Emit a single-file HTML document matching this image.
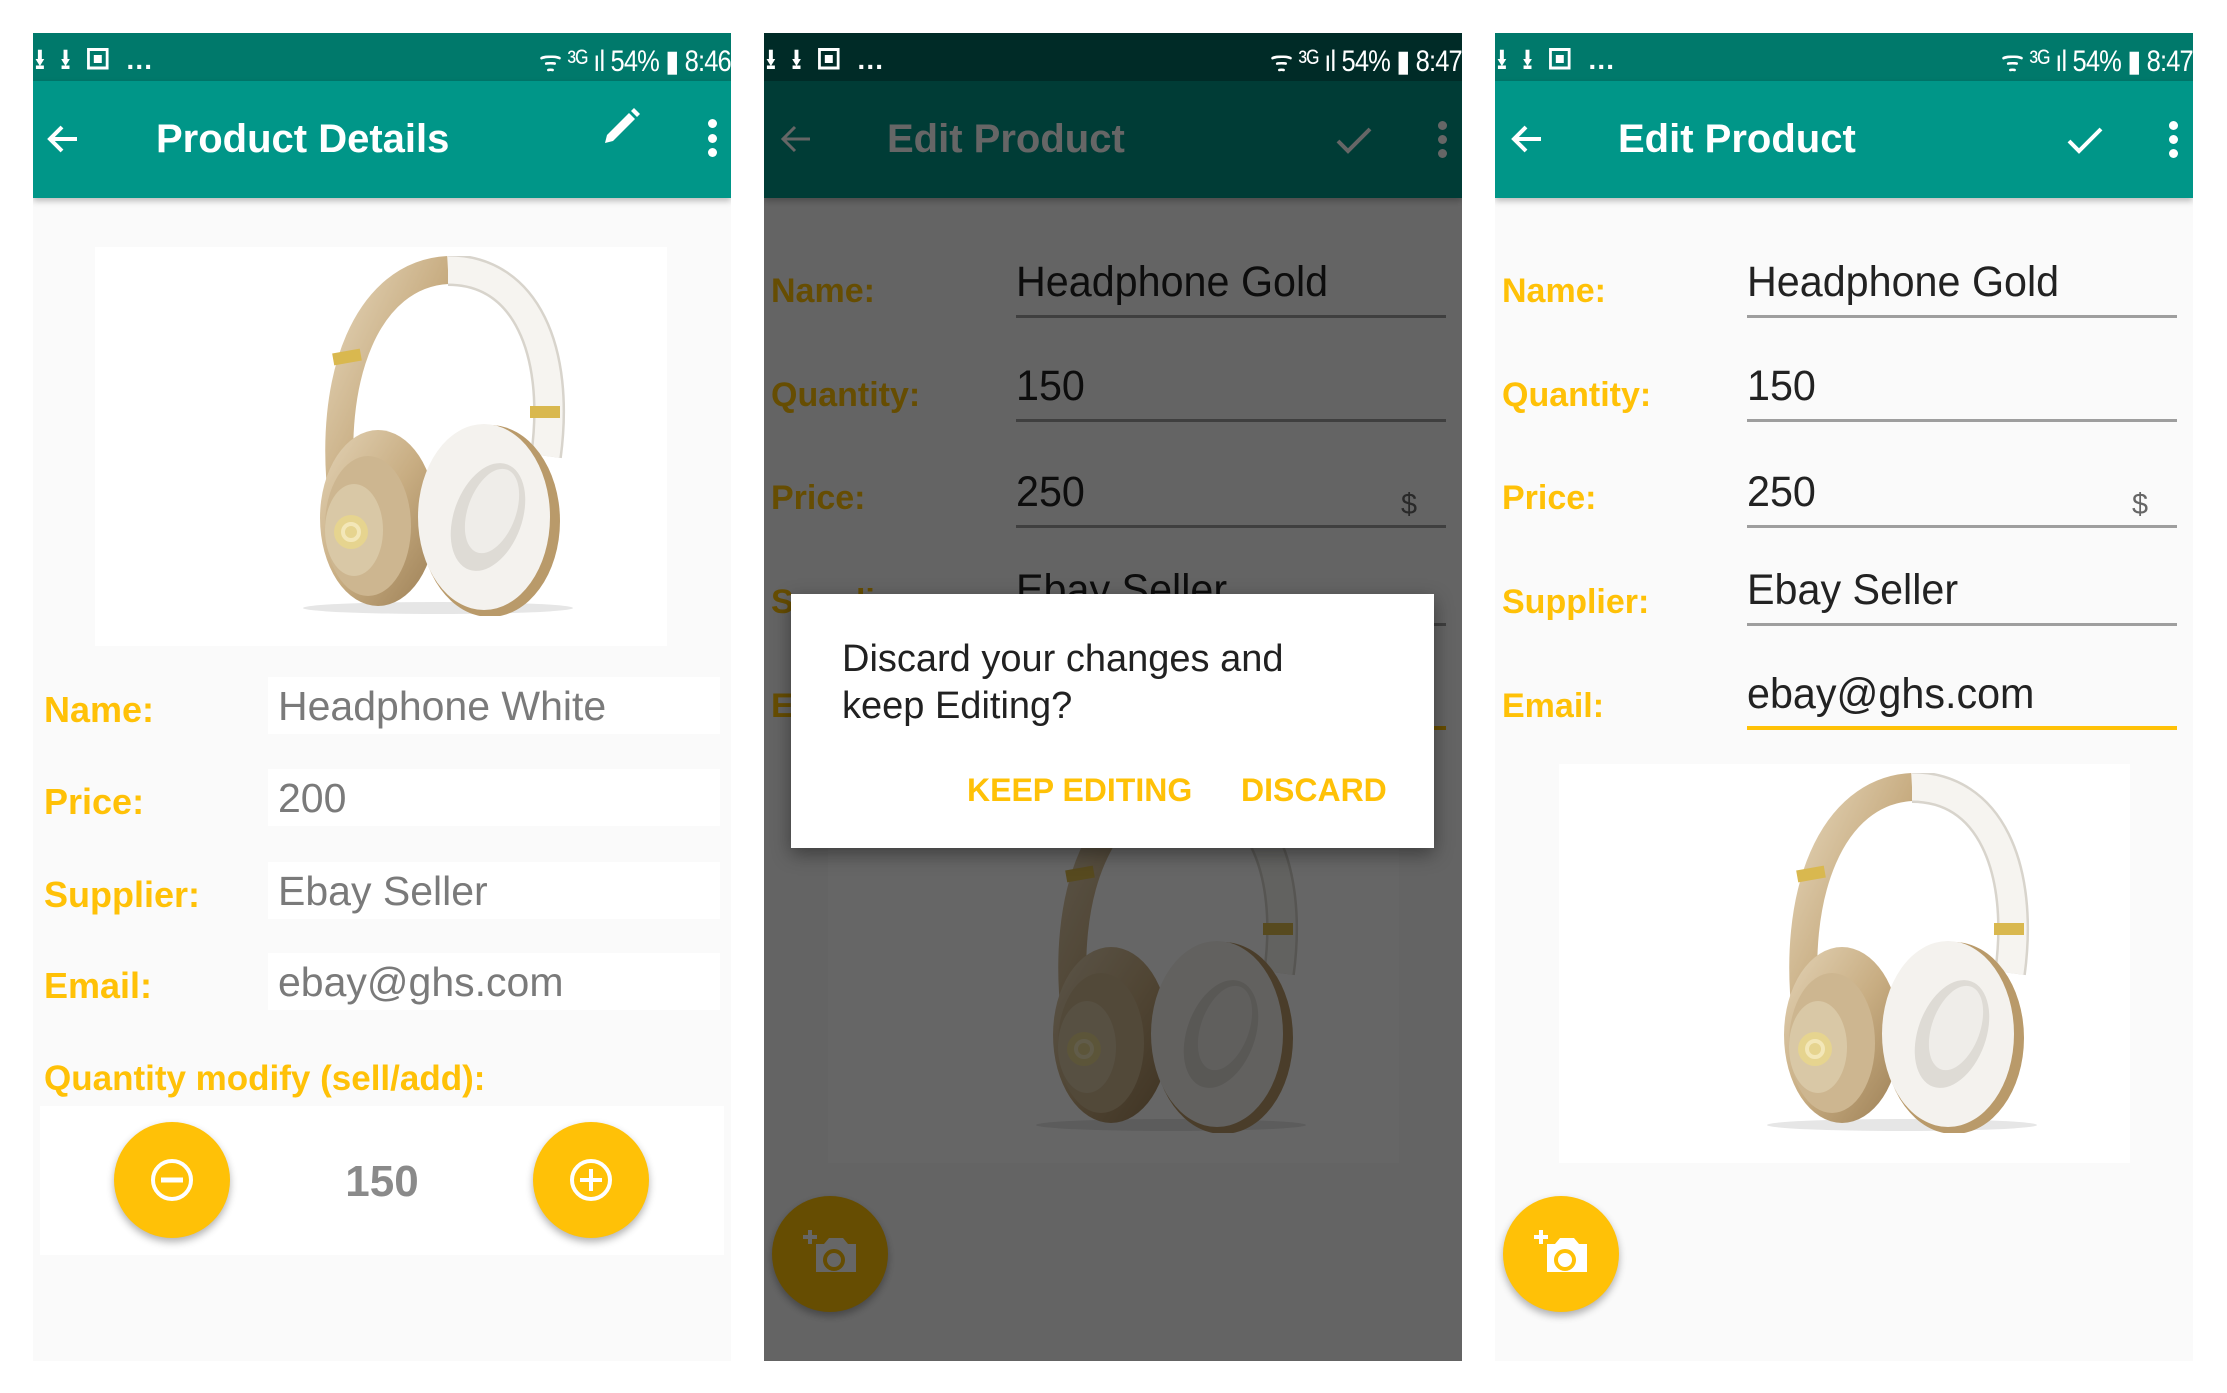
<!DOCTYPE html>
<html><head><meta charset="utf-8">
<style>
*{margin:0;padding:0;box-sizing:border-box}
html,body{width:2227px;height:1393px;background:#fff;overflow:hidden;font-family:"Liberation Sans",sans-serif}
.panel{position:absolute;top:33px;width:698px;height:1328px;background:#fafafa;overflow:hidden}
.sb{position:absolute;left:0;top:0;width:698px;height:48px;background:#00796b;color:#fff}
.sb .l{position:absolute;left:2px;top:6px;font-size:28px;font-weight:bold;letter-spacing:4px}
.sb .r{position:absolute;right:0;top:6px;font-size:30px;letter-spacing:-1px;transform:scaleX(.85);transform-origin:right}
.tb{position:absolute;left:0;top:48px;width:698px;height:117px;background:#009688;box-shadow:0 3px 6px rgba(0,0,0,.25)}
.title{position:absolute;left:123px;top:36px;font-size:40px;font-weight:bold;color:#fff}
.abs{position:absolute}
.lab{position:absolute;left:11px;font-size:36px;font-weight:bold;color:#ffc107;line-height:40px}
.vbox{position:absolute;left:235px;width:452px;height:57px;background:#fff}
.vbox span{position:absolute;left:10px;top:6px;font-size:41px;color:#7a7a7a}
.lab3{position:absolute;left:7px;font-size:34px;font-weight:bold;color:#ffc107;line-height:40px}
.inp{position:absolute;left:252px;width:430px;height:60px;border-bottom:3px solid #9e9e9e}
.inp span{position:absolute;left:0;top:0;font-size:43px;color:#222;transform:scaleX(.96);transform-origin:left;white-space:nowrap}
.card{position:absolute;background:#fff}
.fab{position:absolute;width:116px;height:116px;border-radius:50%;background:#ffc107;box-shadow:0 4px 8px rgba(0,0,0,.3)}
.btn{position:absolute;top:178px;font-size:32px;font-weight:bold;color:#ffc107}
</style></head><body>
<svg width="0" height="0" style="position:absolute">
<defs>
<linearGradient id="gold" x1="0" y1="0" x2="1" y2="1"><stop offset="0" stop-color="#e3d3b6"/><stop offset=".5" stop-color="#c8ad82"/><stop offset="1" stop-color="#9c7f55"/></linearGradient>
<g id="hp">
<ellipse cx="140" cy="352" rx="135" ry="6" fill="#e6e6e6"/>
<path d="M45 250 C28 120 70 18 150 14" fill="none" stroke="url(#gold)" stroke-width="28"/>
<path d="M150 14 C228 14 262 95 248 200" fill="none" stroke="#d8d4cc" stroke-width="32"/>
<path d="M150 14 C228 14 262 95 248 200" fill="none" stroke="#f6f4f0" stroke-width="27"/>
<rect x="35" y="95" width="28" height="12" fill="#d9b84f" transform="rotate(-10 49 101)"/>
<rect x="232" y="150" width="30" height="12" fill="#d9b84f"/>
<ellipse cx="80" cy="262" rx="58" ry="88" fill="url(#gold)"/>
<ellipse cx="70" cy="270" rx="43" ry="70" fill="#cdb690"/>
<ellipse cx="56" cy="274" rx="29" ry="46" fill="#d9c8a6"/>
<circle cx="53" cy="276" r="17" fill="#e6d48f"/>
<circle cx="53" cy="276" r="8" fill="none" stroke="#f3e7b8" stroke-width="4"/>
<ellipse cx="192" cy="265" rx="70" ry="96" fill="#b99a6a"/>
<ellipse cx="186" cy="261" rx="66" ry="93" fill="#f4f2ee"/>
<ellipse cx="190" cy="261" rx="34" ry="56" fill="#dedbd5" transform="rotate(20 190 261)"/>
<ellipse cx="194" cy="255" rx="24" ry="44" fill="#efede9" transform="rotate(20 194 255)"/>
</g>
<g id="cam"><path d="M-18 -14 h8 l5 -6 h14 l5 6 h8 v28 h-40z" fill="#fff" transform="translate(4,6)"/><circle cx="4" cy="8" r="9" fill="none" stroke="#ffc107" stroke-width="4"/><path d="M-20 -22 v14 M-27 -15 h14" stroke="#fff" stroke-width="4"/></g>
</defs></svg>

<!-- PANEL 1 -->
<div class="panel" style="left:33px">
 <div class="sb"><div class="l">⭳ ⭳ ▣ …</div><div class="r">ᯤ ³ᴳ ıl 54% ▮ 8:46</div></div>
 <div class="tb">
  <svg class="abs" style="left:10px;top:38px" width="40" height="40" viewBox="0 0 40 40"><path d="M34 20H8M19 8L7 20l12 12" stroke="#fff" stroke-width="4" fill="none"/></svg>
  <div class="title">Product Details</div>
  <svg class="abs" style="left:566px;top:24px" width="44" height="44" viewBox="0 0 44 44"><path d="M6 38 L8 30 L30 8 L36 14 L14 36z" fill="#fff"/><path d="M32 6 L35 3 L41 9 L38 12z" fill="#fff"/></svg>
  <div class="abs" style="left:675px;top:38px;width:9px;height:9px;border-radius:50%;background:#fff;box-shadow:0 15px 0 #fff,0 29px 0 #fff"></div>
 </div>
 <div class="card" style="left:62px;top:214px;width:572px;height:399px">
  <svg class="abs" style="left:203px;top:9px" width="280" height="360" viewBox="0 0 280 360"><use href="#hp"/></svg>
 </div>
 <div class="lab" style="top:657px">Name:</div>
 <div class="vbox" style="top:644px"><span>Headphone White</span></div>
 <div class="lab" style="top:749px">Price:</div>
 <div class="vbox" style="top:736px"><span>200</span></div>
 <div class="lab" style="top:842px">Supplier:</div>
 <div class="vbox" style="top:829px"><span>Ebay Seller</span></div>
 <div class="lab" style="top:933px">Email:</div>
 <div class="vbox" style="top:920px"><span>ebay@ghs.com</span></div>
 <div class="lab" style="top:1026px;font-size:35px">Quantity modify (sell/add):</div>
 <div class="card" style="left:7px;top:1073px;width:684px;height:149px"></div>
 <div class="fab" style="left:81px;top:1089px"><svg width="116" height="116"><circle cx="58" cy="58" r="19" fill="none" stroke="#fff" stroke-width="4"/><path d="M47 58h22" stroke="#fff" stroke-width="5"/></svg></div>
 <div class="fab" style="left:500px;top:1089px"><svg width="116" height="116"><circle cx="58" cy="58" r="19" fill="none" stroke="#fff" stroke-width="4"/><path d="M47 58h22M58 47v22" stroke="#fff" stroke-width="4"/></svg></div>
 <div class="abs" style="left:299px;top:1124px;width:100px;text-align:center;font-size:44px;font-weight:bold;color:#8a8a8a">150</div>
</div>

<!-- PANEL 2 -->
<div class="panel" style="left:764px">
 <div class="tb">
  <svg class="abs" style="left:12px;top:38px" width="40" height="40" viewBox="0 0 40 40"><path d="M34 20H8M19 8L7 20l12 12" stroke="#fff" stroke-width="3" fill="none"/></svg>
  <div class="title">Edit Product</div>
  <svg class="abs" style="left:568px;top:40px" width="44" height="40" viewBox="0 0 44 40"><path d="M6 20l10 10L38 8" stroke="#fff" stroke-width="4" fill="none"/></svg>
  <div class="abs" style="left:674px;top:40px;width:9px;height:9px;border-radius:50%;background:#fff;box-shadow:0 14px 0 #fff,0 28px 0 #fff"></div>
 </div>
 <div class="lab3" style="top:238px">Name:</div><div class="inp" style="top:225px"><span>Headphone Gold</span></div>
 <div class="lab3" style="top:342px">Quantity:</div><div class="inp" style="top:329px"><span>150</span></div>
 <div class="lab3" style="top:445px">Price:</div><div class="inp" style="top:435px"><span>250</span><span style="left:385px;top:20px;font-size:30px;color:#666">$</span></div>
 <div class="lab3" style="top:549px">Supplier:</div><div class="inp" style="top:533px"><span>Ebay Seller</span></div>
 <div class="lab3" style="top:653px">Email:</div><div class="inp" style="top:637px;border-bottom:4px solid #ffc107"><span>ebay@ghs.com</span></div>
 <div class="card" style="left:64px;top:731px;width:571px;height:399px">
  <svg class="abs" style="left:203px;top:9px" width="280" height="360" viewBox="0 0 280 360"><use href="#hp"/></svg>
 </div>
 <div class="fab" style="left:8px;top:1163px"><svg width="116" height="116"><g transform="translate(58,56)"><use href="#cam"/></g></svg></div>
 <div class="abs" style="left:0;top:0;width:698px;height:1328px;background:rgba(0,0,0,.6)"></div>
 <div class="sb" style="background:#002b27"><div class="l">⭳ ⭳ ▣ …</div><div class="r">ᯤ ³ᴳ ıl 54% ▮ 8:47</div></div>
 <div class="abs" style="left:27px;top:561px;width:643px;height:254px;background:#fff;box-shadow:0 6px 18px rgba(0,0,0,.4)">
  <div class="abs" style="left:51px;top:42px;font-size:38px;color:#212121;line-height:47px">Discard your changes and<br>keep Editing?</div>
  <div class="btn" style="left:176px">KEEP EDITING</div>
  <div class="btn" style="left:450px">DISCARD</div>
 </div>
</div>

<!-- PANEL 3 -->
<div class="panel" style="left:1495px">
 <div class="sb"><div class="l">⭳ ⭳ ▣ …</div><div class="r">ᯤ ³ᴳ ıl 54% ▮ 8:47</div></div>
 <div class="tb">
  <svg class="abs" style="left:12px;top:38px" width="40" height="40" viewBox="0 0 40 40"><path d="M34 20H8M19 8L7 20l12 12" stroke="#fff" stroke-width="4" fill="none"/></svg>
  <div class="title">Edit Product</div>
  <svg class="abs" style="left:568px;top:40px" width="44" height="40" viewBox="0 0 44 40"><path d="M6 20l10 10L38 8" stroke="#fff" stroke-width="4" fill="none"/></svg>
  <div class="abs" style="left:674px;top:40px;width:9px;height:9px;border-radius:50%;background:#fff;box-shadow:0 14px 0 #fff,0 28px 0 #fff"></div>
 </div>
 <div class="lab3" style="top:238px">Name:</div><div class="inp" style="top:225px"><span>Headphone Gold</span></div>
 <div class="lab3" style="top:342px">Quantity:</div><div class="inp" style="top:329px"><span>150</span></div>
 <div class="lab3" style="top:445px">Price:</div><div class="inp" style="top:435px"><span>250</span><span style="left:385px;top:20px;font-size:30px;color:#666">$</span></div>
 <div class="lab3" style="top:549px">Supplier:</div><div class="inp" style="top:533px"><span>Ebay Seller</span></div>
 <div class="lab3" style="top:653px">Email:</div><div class="inp" style="top:637px;border-bottom:4px solid #ffc107"><span>ebay@ghs.com</span></div>
 <div class="card" style="left:64px;top:731px;width:571px;height:399px">
  <svg class="abs" style="left:203px;top:9px" width="280" height="360" viewBox="0 0 280 360"><use href="#hp"/></svg>
 </div>
 <div class="fab" style="left:8px;top:1163px"><svg width="116" height="116"><g transform="translate(58,56)"><use href="#cam"/></g></svg></div>
</div>
</body></html>
